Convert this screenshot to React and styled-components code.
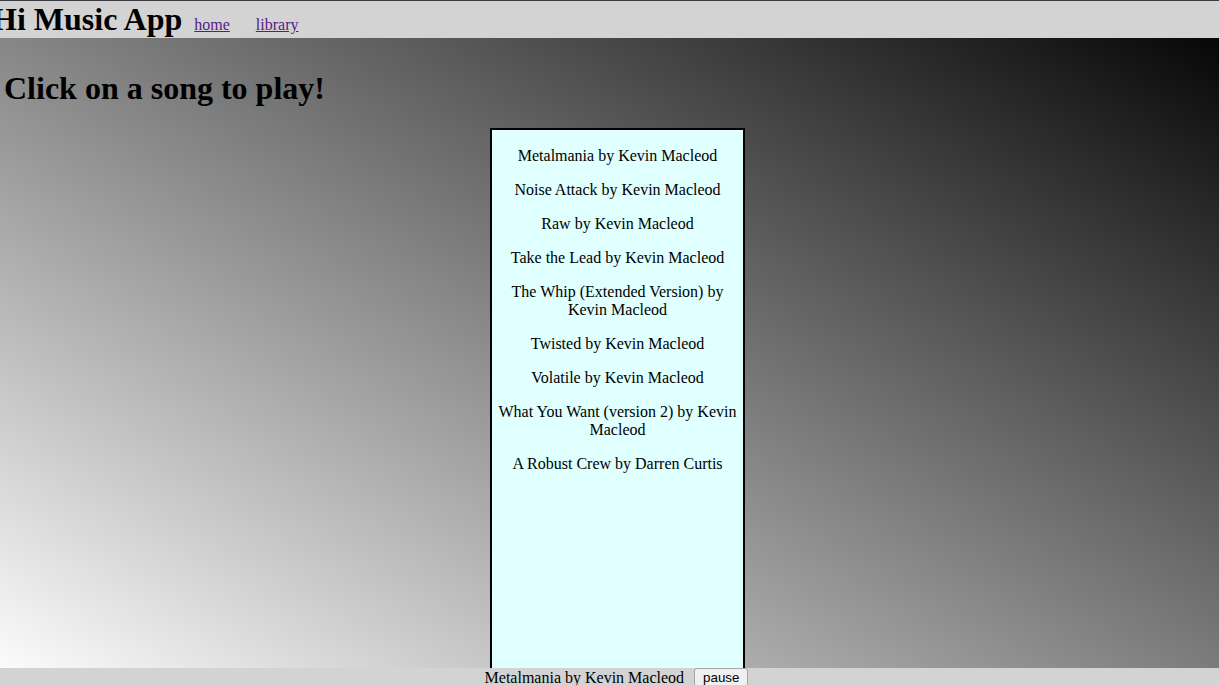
import styled, { createGlobalStyle } from 'styled-components';

const GlobalStyle = createGlobalStyle`
  html, body {
    margin: 0;
    padding: 0;
    overflow: hidden;
  }
  body {
    font-family: "Liberation Serif", "Times New Roman", serif;
  }
`;

const Page = styled.div`
  min-height: 100vh;
  background: linear-gradient(to top right, #ffffff, #000000);
`;

const Header = styled.header`
  display: flex;
  align-items: baseline;
  height: 37px;
  background: lightgray;
  border-top: 1px solid #3b3b45;
  overflow: hidden;
`;

const AppName = styled.h1`
  margin: 0 0 0 -8px;
  font-size: 32px;
  line-height: 37px;
  font-weight: bold;
  white-space: nowrap;
`;

const Nav = styled.nav`
  display: flex;
  gap: 26px;
  margin-left: 12px;
`;

const NavLink = styled.a`
  font-size: 16px;
  color: #551a8b;
  text-decoration: underline;
`;

const Title = styled.h1`
  margin: 32px 0 21px 4px;
  font-size: 32px;
  font-weight: bold;
`;

const ListWrap = styled.div`
  display: flex;
  justify-content: center;
  padding-left: 16px;
`;

const SongList = styled.div`
  width: 255px;
  height: 560px;
  box-sizing: border-box;
  padding: 1px 4px 0;
  background: lightcyan;
  border: 2px solid #000;
`;

const Song = styled.p`
  margin: 16px 0;
  font-size: 16px;
  text-align: center;
  cursor: pointer;
`;

const Player = styled.footer`
  position: fixed;
  left: 0;
  right: 0;
  top: 668px;
  height: 24px;
  display: flex;
  justify-content: center;
  align-items: flex-start;
  gap: 10px;
  padding-left: 14px;
  background: lightgray;
`;

const NowPlaying = styled.span`
  font-size: 16px;
  line-height: 20px;
`;

const Button = styled.button`
  font-family: "Liberation Sans", Arial, sans-serif;
  font-size: 13.33px;
  padding: 1px 8px;
  background: #f0f0f0;
  border: 1px solid #a6a6a6;
  border-radius: 3px;
  color: #000;
`;

const songs = [
  'Metalmania by Kevin Macleod',
  'Noise Attack by Kevin Macleod',
  'Raw by Kevin Macleod',
  'Take the Lead by Kevin Macleod',
  'The Whip (Extended Version) by Kevin Macleod',
  'Twisted by Kevin Macleod',
  'Volatile by Kevin Macleod',
  'What You Want (version 2) by Kevin Macleod',
  'A Robust Crew by Darren Curtis',
];

export default function App() {
  return (
    <Page>
      <GlobalStyle />
      <Header>
        <AppName>Hi Music App</AppName>
        <Nav>
          <NavLink href="#">home</NavLink>
          <NavLink href="#">library</NavLink>
        </Nav>
      </Header>
      <Title>Click on a song to play!</Title>
      <ListWrap>
        <SongList>
          {songs.map((s) => (
            <Song key={s}>{s}</Song>
          ))}
        </SongList>
      </ListWrap>
      <Player>
        <NowPlaying>{songs[0]}</NowPlaying>
        <Button>pause</Button>
      </Player>
    </Page>
  );
}
